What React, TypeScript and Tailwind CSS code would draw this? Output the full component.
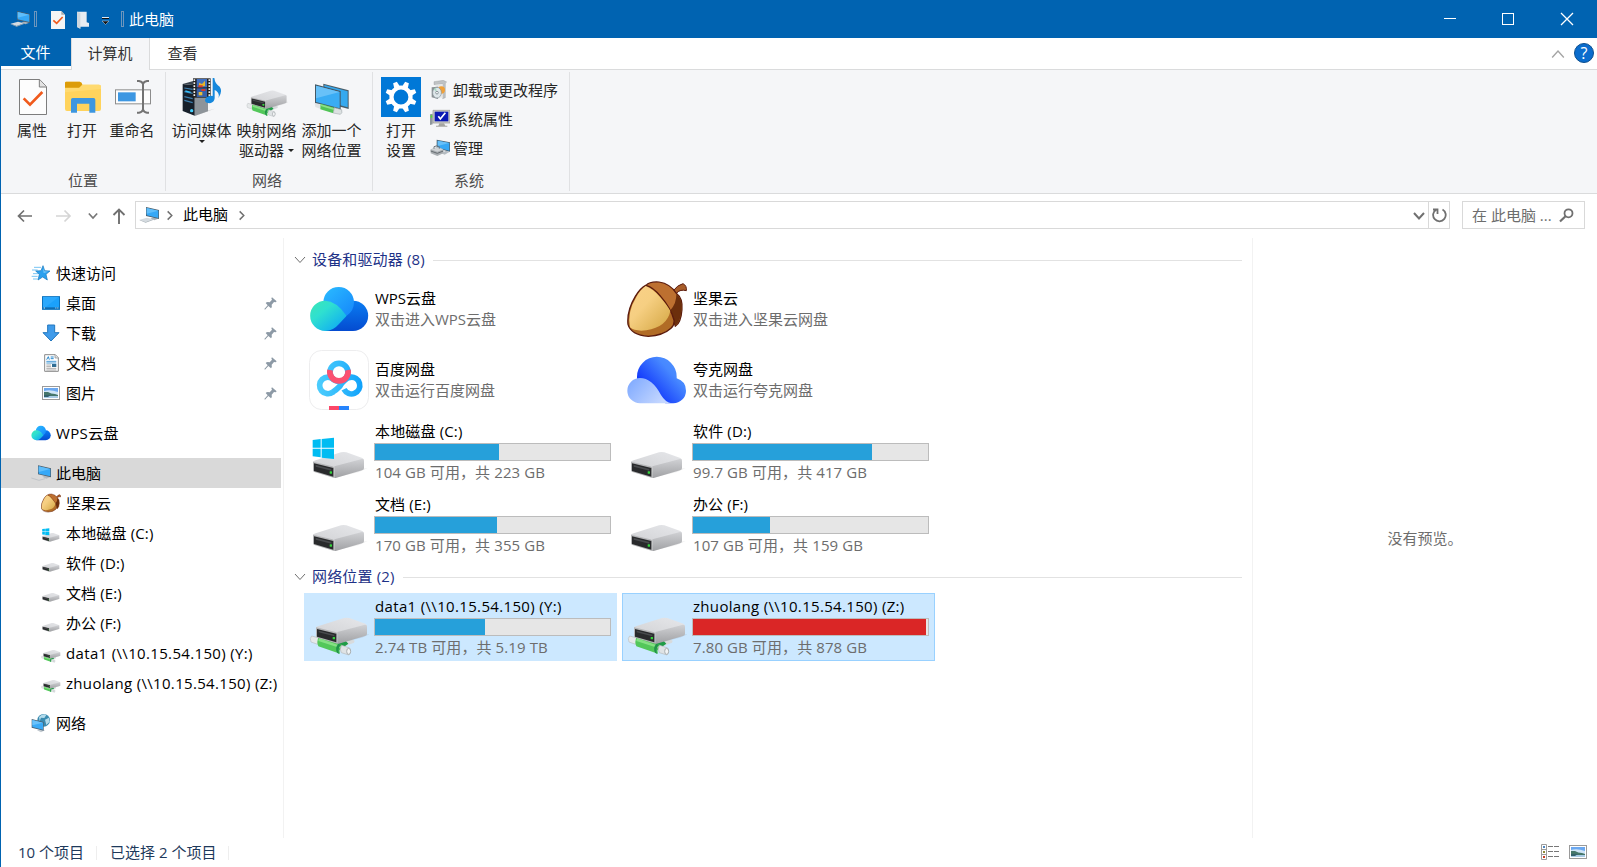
import React, { useId } from "react";

type IconProps = { size?: number; className?: string };

function Monitor({ size = 20 }: IconProps) {
  return (
    <svg width={size} height={size} viewBox="0 0 60 60" className="shrink-0">
      <path d="M2 44 24 38 42 43 20 51Z" fill="#d5dbe0" />
      <path d="M2 44 20 51 42 43 42 45 20 53 2 46Z" fill="#a3adb5" />
      <path d="M34 40 46 37 58 41 46 46Z" fill="#aab2b9" />
      <path d="M21 6 60 15 60 42 21 33Z" fill="#4c5f6d" />
      <path d="M23 9 58 17 58 39 23 31Z" fill="#35a8f7" />
      <path d="M23 9 58 17 23 26Z" fill="#5fbefb" />
    </svg>
  );
}

function MonitorOutline() {
  return (
    <svg width="20" height="20" viewBox="0 0 60 60" className="shrink-0">
      <path d="M1 45 24 52 42 47" fill="none" stroke="#b3bac0" strokeWidth="2" />
      <path d="M34 41 46 37 58 42 46 47Z" fill="#b4babf" />
      <path d="M21 7 60 16 60 43 21 34Z" fill="#4c5f6d" />
      <path d="M23 10 58 18 58 40 23 32Z" fill="#35a8f7" />
      <path d="M23 10 58 18 23 27Z" fill="#5fbefb" />
    </svg>
  );
}

function DriveShape() {
  const id = useId();
  return (
    <>
      <defs>
        <linearGradient id={id + "t"} x1="0" y1="1" x2="1" y2="0">
          <stop offset="0" stopColor="#d2d3d6" />
          <stop offset="1" stopColor="#e6e7ea" />
        </linearGradient>
        <linearGradient id={id + "s"} x1="0" y1="0" x2="0" y2="1">
          <stop offset="0" stopColor="#d0d1d4" />
          <stop offset="1" stopColor="#a0a1a4" />
        </linearGradient>
      </defs>
      <path d="M76 168 20 150 100 150 176 138 150 150Z" fill="#000" opacity=".07" />
      <path d="M12 120Q12 117 20 115L96 91Q103 89 112 91L160 108Q166 111 165 116L76 138Z" fill={`url(#${id}t)`} />
      <path d="M76 133 159 111Q166 111 165 117L165 139Q165 143 159 145L80 168 76 168Z" fill={`url(#${id}s)`} />
      <path d="M12 119 70 133Q76 134 76 139L76 168 16 150Q12 149 12 145Z" fill="#b4b5b7" />
      <path d="M15 124 73 138 73 164 15 147Z" fill="#292a2c" />
      <path d="M20 129 67 141 67 146 20 134Z" fill="#494b4e" />
      <rect x="62" y="148" width="7" height="7" rx="1" fill="#35d43c" />
    </>
  );
}

function Drive({ size = 60, kind = "plain" }: IconProps & { kind?: "plain" | "win" | "net" }) {
  return (
    <svg width={size} height={size} viewBox="0 0 180 180" className="shrink-0">
      {kind === "net" ? (
        <>
          <path d="M90 139 128 127 137 131 135 137 96 152Z" fill="#d8dbdd" />
          <path d="M80 142 108 130 118 140 90 160Z" fill="#1f9c47" />
          <path d="M8 117 30 123 26 142 6 135Q1 123 8 117Z" fill="#e6e9ea" stroke="#b9bec1" strokeWidth="2" />
          <path d="M29 119 100 144Q88 154 93 170L28 148Q22 134 29 119Z" fill="#53c75a" />
          <path d="M30 124 96 147 93 153 28 132Z" fill="#85e083" />
          <path d="M96 143Q84 156 91 171L85 168Q76 153 88 140Z" fill="#21934a" />
          <path d="M98 145 122 153Q128 160 120 174L97 167Q90 156 98 145Z" fill="#dfe3e5" stroke="#b5babd" strokeWidth="2" />
          <ellipse cx="119" cy="163" rx="6" ry="9" fill="#f2f4f5" stroke="#a9afb2" strokeWidth="3" />
          <g transform="translate(9,-28)">
            <DriveShape />
          </g>
        </>
      ) : (
        <DriveShape />
      )}
      {kind === "win" && (
        <path d="M11 54 35 51V77H11ZM38 51 75 47V77H38ZM11 80H35V106L11 103ZM38 80H75V111L38 107Z" fill="#00bcf2" />
      )}
    </svg>
  );
}

function WpsCloud({ size = 60 }: IconProps) {
  const id = useId();
  return (
    <svg width={size} height={size} viewBox="0 0 180 180" className="shrink-0">
      <defs>
        <linearGradient id={id + "a"} x1="0" y1="0" x2="1" y2="1">
          <stop offset="0" stopColor="#3ee6b4" />
          <stop offset=".35" stopColor="#2fe0d0" />
          <stop offset="1" stopColor="#08a0fb" />
        </linearGradient>
        <linearGradient id={id + "b"} x1="0" y1="0" x2="1" y2="1">
          <stop offset="0" stopColor="#2bbcff" />
          <stop offset="1" stopColor="#1587fb" />
        </linearGradient>
        <linearGradient id={id + "c"} x1="0" y1="0" x2="0" y2="1">
          <stop offset="0" stopColor="#0a7df2" />
          <stop offset="1" stopColor="#044bd0" />
        </linearGradient>
      </defs>
      <path d="M50 156H132A45.500 45.500 0 1 0 132 65L90 90Z" fill={`url(#${id}c)`} />
      <path d="M43 70A46 46 0 0 1 135 70Q135 96 113 110Q80 72 43 70Z" fill={`url(#${id}b)`} />
      <path d="M49 65A45.500 45.500 0 0 0 49 156Q72 156 90 135L113 110Q80 65 49 65Z" fill={`url(#${id}a)`} />
    </svg>
  );
}

function Acorn({ size = 60 }: IconProps) {
  const id = useId();
  return (
    <svg width={size} height={size} viewBox="0 0 180 180" className="shrink-0">
      <defs>
        <linearGradient id={id} x1="0" y1="0" x2="1" y2="1">
          <stop offset="0" stopColor="#fad188" />
          <stop offset=".4" stopColor="#f6cf82" />
          <stop offset="1" stopColor="#d3a541" />
        </linearGradient>
      </defs>
      <path d="M137 37Q152 17 168 14Q180 20 178 35Q160 30 149 42Z" fill="#a85d29" stroke="#5b1b0d" strokeWidth="3" />
      <path d="M57 19Q68 7 96 9Q130 14 148 43Q168 58 165 92Q162 132 145 142L130 96Z" fill="#bd7030" stroke="#5b1b0d" strokeWidth="3.5" />
      <path d="M148 45Q168 60 164 92Q160 130 144 141Q141 115 130 94Q149 72 148 45Z" fill="#6c2f0c" />
      <path d="M56 19Q78 24 101 52Q132 88 141 123Q143 138 132 148Q108 170 64 172Q12 168 3 136Q-1 95 25 52Q40 27 56 19Z" fill="#b16c26" stroke="#5b1b0d" strokeWidth="4" />
      <path d="M56 21Q78 29 99 54Q120 78 130 96Q120 144 58 154Q24 158 9 145Q0 100 28 54Q40 32 56 21Z" fill={`url(#${id})`} />
    </svg>
  );
}

function BaiduPan() {
  return (
    <svg width="60" height="60" viewBox="0 0 180 180" className="shrink-0">
      <defs>
        <linearGradient id="bdBlue" gradientUnits="userSpaceOnUse" x1="24" y1="0" x2="158" y2="0">
          <stop offset="0" stopColor="#4ccdfd" />
          <stop offset=".5" stopColor="#34bcfb" />
          <stop offset="1" stopColor="#10a2fb" />
        </linearGradient>
      </defs>
      <rect x="1.5" y="1.5" width="177" height="177" rx="36" fill="#fff" stroke="#ededee" strokeWidth="3" />
      <g fill="none" strokeWidth="17">
        <circle cx="90" cy="67" r="27" stroke="url(#bdBlue)" />
        <path d="M72 126A25 25 0 1 1 74 88" stroke="url(#bdBlue)" />
        <path d="M70 127Q82 120 93 108Q107 86 123 82A25 25 0 1 1 105 118" stroke="url(#bdBlue)" />
        <path d="M63 60A27.500 27.500 0 1 0 117 60" stroke="#fb5171" />
      </g>
      <path d="M60 168H90V180H60Z" fill="#fb4768" />
      <path d="M90 168H120V180H90Z" fill="#2684fc" />
    </svg>
  );
}

function QuarkPan() {
  return (
    <svg width="60" height="60" viewBox="0 0 180 180" className="shrink-0">
      <defs>
        <linearGradient id="qkMain" x1="1" y1=".2" x2=".3" y2=".8">
          <stop offset="0" stopColor="#5092ff" />
          <stop offset=".35" stopColor="#4788ff" />
          <stop offset="1" stopColor="#1238fb" />
        </linearGradient>
        <linearGradient id="qkLight" x1="0" y1="0" x2="1" y2=".5">
          <stop offset="0" stopColor="#7ba7ff" />
          <stop offset="1" stopColor="#c5d7ff" />
        </linearGradient>
      </defs>
      <path d="M30 92V80A59.500 59.500 0 0 1 149 80V85Q177 94 177 122A38 38 0 0 1 139 160H115Z" fill="url(#qkMain)" />
      <path d="M39 84A38 38 0 0 0 39 160H134Q116 158 102 135Q75 84 39 84Z" fill="url(#qkLight)" />
    </svg>
  );
}

function Picture({ w = 18 }: { w?: number }) {
  return (
    <svg width={w} height="14" viewBox="0 0 18 14" className="shrink-0">
      <rect x=".5" y=".5" width="17" height="13" fill="#fff" stroke="#9a9a9a" />
      <path d="M2 2H16V12H2Z" fill="#6ba8f0" />
      <path d="M2 5Q8 3 16 6V9H2Z" fill="#cfe4f7" />
      <path d="M2 6 6 6Q9 8 13 8L16 9V10H2Z" fill="#45766a" />
      <path d="M2 10H16V12H2Z" fill="#a9cbe6" />
      <path d="M2 9H9L6 11H2Z" fill="#35626d" />
    </svg>
  );
}

function QuickStar() {
  return (
    <svg width="20" height="20" viewBox="0 0 60 60" className="shrink-0">
      <path d="M9 13H30M3 21H20M6 32H22M2 40H20M6 48H20" stroke="#5cb8f1" strokeWidth="2.500" />
      <path d="M36 8 41 23 57 24 45 34 49 51 35 42 21 51 25 34 14 24 30 23Z" fill="#2aa0ee" stroke="#1275bd" strokeWidth="2" />
      <path d="M36 14 40 25 52 26 38 30Z" fill="#75c8fa" />
    </svg>
  );
}

function Desktop() {
  return (
    <svg width="18" height="14" viewBox="0 0 54 42" className="shrink-0">
      <rect x="1.500" y="2" width="51" height="38" fill="#1ba1fb" stroke="#0b72bd" strokeWidth="3" />
      <path d="M3 3H50L10 34H3Z" fill="#2ba9fd" />
      <path d="M3 34H51V39H3Z" fill="#0f6cb1" />
      <path d="M5 36H9M40 36H43M46 36H49" stroke="#fff" strokeWidth="2.500" />
    </svg>
  );
}

function Download() {
  return (
    <svg width="18" height="18" viewBox="0 0 54 54" className="shrink-0">
      <path d="M17 3H38V26H51L27 51 3 26H17Z" fill="#3f9bea" stroke="#2277be" strokeWidth="3" />
    </svg>
  );
}

function DocIcon() {
  return (
    <svg width="15" height="18" viewBox="0 0 45 54" className="shrink-0">
      <path d="M2 2H34L43 11V52H2Z" fill="#fff" stroke="#8a8a8a" strokeWidth="3" />
      <path d="M33 2V12H43" fill="#ddd" stroke="#8a8a8a" strokeWidth="2" />
      <path d="M8 17 13 8 16 17M20 9H29M20 14H29" stroke="#2787cc" strokeWidth="3" fill="none" />
      <path d="M7 22H37M7 27H37" stroke="#2787cc" strokeWidth="2.500" />
      <path d="M7 33H21M7 38H21M7 43H37M7 48H37" stroke="#9b9b9b" strokeWidth="2.500" />
      <path d="M24 30H37V39H24Z" fill="#2f6d93" />
    </svg>
  );
}

function NetworkIcon() {
  return (
    <svg width="20" height="20" viewBox="0 0 60 60" className="shrink-0">
      <circle cx="38" cy="22" r="19" fill="#3a8bb0" />
      <path d="M24 12Q36 0 46 6L40 15 30 14 26 24ZM42 20 54 14 56 26 46 36Z" fill="#b4dcec" />
      <path d="M18 52 30 48 42 52 30 58Z" fill="#c2c9cf" />
      <path d="M2 18 38 27V53L2 44Z" fill="#4a6274" />
      <path d="M4 21 36 29V50L4 42Z" fill="#3aaaf6" />
      <path d="M4 21 36 29 4 37Z" fill="#69c2fb" />
    </svg>
  );
}

function Pin() {
  return (
    <svg width="13" height="13" viewBox="0 0 39 39" className="shrink-0">
      <path d="M24 1 38 13 35 16 30 15 23 23Q25 30 21 34L13 27 3 38 1 36 11 25 5 18Q9 13 17 16L24 8 22 4Z" fill="#8d9aa6" />
    </svg>
  );
}

function PropertiesIcon() {
  return (
    <svg width="28" height="36" viewBox="0 0 84 108" className="ml-px">
      <path d="M1.500 1.500H62L82.500 23V106.500H1.500Z" fill="#fdfdfd" stroke="#7d7d7d" strokeWidth="3" />
      <path d="M61 2V24H82" fill="#e3e3e3" stroke="#7d7d7d" strokeWidth="3" />
      <path d="M14 58 33 77 70 39" fill="none" stroke="#f05a1c" strokeWidth="8" />
    </svg>
  );
}

function OpenFolderIcon() {
  return (
    <svg width="36" height="32" viewBox="0 0 108 96" className="ml-[2px]">
      <path d="M0 6Q0 2 4 2H44Q51 3 52 11H102Q108 11 108 17V84Q108 90 102 90H6Q0 90 0 84Z" fill="#ffd35c" />
      <path d="M0 6Q0 2 4 2H44Q51 3 52 11L44 20H0Z" fill="#dc9c08" />
      <path d="M0 21H42L52 11H102Q108 11 108 17V24L0 34Z" fill="#ffda70" />
      <path d="M18 95V56Q18 51 23 51H86Q91 51 91 56V95H73V68H36V95Z" fill="#3c96df" />
    </svg>
  );
}

function RenameIcon() {
  return (
    <svg width="36" height="34" viewBox="0 0 108 102" className="ml-[2px]">
      <rect x="1.500" y="29.500" width="105" height="42" fill="#fdfdfd" stroke="#8c8c8c" strokeWidth="3" />
      <path d="M9 37H62V64H9Z" fill="#3d97e2" />
      <path d="M66 3H72Q81 4 84 12Q87 4 96 3H102M84 10V92M66 98H72Q81 97 84 89Q87 97 96 98H102" fill="none" stroke="#737373" strokeWidth="6" />
    </svg>
  );
}

function MediaIcon() {
  return (
    <svg width="40" height="38" viewBox="0 0 120 114">
      <path d="M38 20 78 10V100L38 114Z" fill="#8d949a" />
      <path d="M76 98 98 92 40 113Z" fill="#999" opacity=".5" />
      <path d="M2 18 38 22V113L2 99Z" fill="#17202b" />
      <path d="M2 18 34 9 60 12 38 22Z" fill="#39434e" />
      <path d="M7 30 32 34M7 41 32 46M7 56 32 62M7 67 32 74" stroke="#3e7fae" strokeWidth="3.500" />
      <path d="M10 39 26 43" stroke="#36c3ff" strokeWidth="4" />
      <circle cx="29" cy="98" r="5" fill="#45d2ff" />
      <path d="M33 1H86V59H33Z" fill="#222" />
      <path d="M44 3H75V28H44Z" fill="#416fbe" />
      <path d="M44 31H75V57H44Z" fill="#355fa9" />
      <path d="M51 14 60 18 69 8 69 24 51 26Z" fill="#e5b328" />
      <path d="M49 22H62V28H49ZM58 33H70V39H58Z" fill="#d73a2b" />
      <path d="M50 42H61V52H50Z" fill="#e8bd3a" />
      <path d="M37 4V58M82 4V58" stroke="#f0f0f0" strokeWidth="5" strokeDasharray="5 4" />
      <path d="M92 0H97Q99 18 113 26Q123 40 109 61Q115 44 98 36V61Q97 73 84 76Q69 76 69 66Q72 54 86 53L92 54Z" fill="#1688dc" />
    </svg>
  );
}

function NetPlaceIcon() {
  return (
    <svg width="36" height="32" viewBox="0 0 108 96" className="mt-[4px]">
      <path d="M28 2 104 22V78L28 58Z" fill="#4b5d68" />
      <path d="M31 6 101 25V73L31 54Z" fill="#36a9ef" />
      <path d="M3 4 80 24V81L3 61Z" fill="#455864" />
      <path d="M6 8 77 27V76L6 57Z" fill="#3aacf4" />
      <path d="M6 8 77 27 6 46Z" fill="#68c1f8" />
      <path d="M2 60 22 64 20 78 4 72Z" fill="#e0e3e4" />
      <path d="M20 62 62 74 58 91 19 79Z" fill="#51c457" />
      <path d="M20 64 61 76 60 81 20 69Z" fill="#8ddf8b" />
      <path d="M61 74 83 80Q86 91 79 94L58 90Z" fill="#dce1e2" stroke="#a9b0b4" strokeWidth="2" />
    </svg>
  );
}

function GearIcon() {
  return (
    <svg width="40" height="40" viewBox="0 0 40 40">
      <path d="M0 0H40V40H0Z" fill="#0078d7" />
      <circle cx="20" cy="20" r="9.500" fill="none" stroke="#fff" strokeWidth="4.200" />
      {[22.5, 67.5, 112.5, 157.5, 202.5, 247.5, 292.5, 337.5].map((a) => (
        <path key={a} d="M16.900 10.500 18 4.300H22L23.100 10.500Z" fill="#fff" transform={`rotate(${a} 20 20)`} />
      ))}
    </svg>
  );
}

function UninstallIcon() {
  return (
    <svg width="20" height="20" viewBox="0 0 60 60" className="shrink-0">
      <path d="M12 5 40 1 50 6 46 9V53L38 56V12L12 14Z" fill="#bfc2c4" stroke="#8c9092" />
      <path d="M16 14 38 12V54L18 50Z" fill="#e6e7e7" />
      <circle cx="34" cy="30" r="11" fill="#f0a13a" />
      <path d="M5 22 24 20V57L5 52Z" fill="#8b9194" />
      <ellipse cx="21" cy="38" rx="13" ry="16" fill="#dfe7ea" stroke="#87939a" strokeWidth="2" />
      <path d="M21 38 11 27 18 23Z" fill="#a9d8c3" />
      <circle cx="21" cy="38" r="4" fill="#fff" stroke="#8c979c" strokeWidth="3" />
    </svg>
  );
}

function SysPropIcon() {
  return (
    <svg width="20" height="20" viewBox="0 0 60 60" className="shrink-0">
      <path d="M0 16 8 14V46L0 48Z" fill="#8f979c" />
      <path d="M2 19H7V26H2Z" fill="#50e02c" />
      <path d="M9 4H60V42H9Z" fill="#cdcdc8" stroke="#92928e" strokeWidth="2" />
      <path d="M14 8H55V37H14Z" fill="#0a18b4" />
      <path d="M25 22 31 30 46 11" stroke="#fff" strokeWidth="5" fill="none" />
      <path d="M28 43H42L46 50H52V53H18V50H25Z" fill="#a6a6a1" />
    </svg>
  );
}

function ManageIcon() {
  return (
    <svg width="20" height="20" viewBox="0 0 60 60" className="shrink-0">
      <path d="M34 46 48 38 58 42 44 50Z" fill="#b5bcc2" />
      <path d="M20 5 60 13V41L20 31Z" fill="#4b5f6d" />
      <path d="M23 8 58 15V38L23 29Z" fill="#36a8f5" />
      <path d="M23 8 58 15 23 24Z" fill="#66c0fa" />
      <path d="M2 34 22 28 40 34V46L22 54 2 46Z" fill="#a9aeb2" />
      <path d="M2 34 22 28 40 34 22 41Z" fill="#cfd3d6" />
      <path d="M12 32V26Q20 21 28 26V32" fill="none" stroke="#70777c" strokeWidth="3" />
      <path d="M2 39 22 46 40 39" fill="none" stroke="#666d72" strokeWidth="3" />
    </svg>
  );
}

function Chevron({ dir = "down", w = 11, color = "#707070", stroke = 1 }: { dir?: "down" | "right" | "up"; w?: number; color?: string; stroke?: number }) {
  const d = dir === "down" ? "M1 3 6 8.500 11 3" : dir === "up" ? "M1 9 6 3.500 11 9" : "M4 1.500 8.500 6 4 10.500";
  return (
    <svg width={w} height={w} viewBox="0 0 12 12" className="shrink-0">
      <path d={d} fill="none" stroke={color} strokeWidth={stroke} />
    </svg>
  );
}

function RibbonButton({ icon, lines, width, arrow }: { icon: React.ReactNode; lines: string[]; width: string; arrow?: "below" | "inline" }) {
  return (
    <div className={`flex flex-col items-center ${width}`}>
      <div className="flex h-[46px] items-center justify-center">{icon}</div>
      {lines.map((l, i) => (
        <div key={l} className="flex h-5 items-center whitespace-nowrap leading-5">
          {l}
          {arrow === "inline" && i === lines.length - 1 && <span className="ml-1 border-x-[3px] border-t-[3px] border-x-transparent border-t-[#222]" />}
        </div>
      ))}
      {arrow === "below" && <span className="border-x-[3px] border-t-[3px] border-x-transparent border-t-[#222]" />}
    </div>
  );
}

function RibbonGroup({ label, width, labelPad = "", children }: { label: string; width: string; labelPad?: string; children: React.ReactNode }) {
  return (
    <div className={`my-[2px] flex shrink-0 flex-col border-r border-[#e0e1e3] ${width}`}>
      <div className="flex h-[98px] pt-[2px]">{children}</div>
      <div className={`text-center leading-5 text-[#4d4d4d] ${labelPad}`}>{label}</div>
    </div>
  );
}

function NavItem({ icon, label, child, pin, selected, spacing = "" }: { icon: React.ReactNode; label: string; child?: boolean; pin?: boolean; selected?: boolean; spacing?: string }) {
  return (
    <div className={`flex h-[30px] w-[280px] items-center ${child ? "pl-10" : "pl-[30px]"} ${selected ? "bg-[#d9d9d9]" : ""}`}>
      <span className="flex w-5 justify-center">{icon}</span>
      <span className={`ml-[5px] grow whitespace-nowrap leading-5 ${spacing}`}>{label}</span>
      {pin && <span className="mr-1"><Pin /></span>}
    </div>
  );
}

function SectionHead({ label }: { label: string }) {
  return (
    <div className="flex h-5 w-[948px] items-center">
      <span className="mt-px"><Chevron w={12} color="#6e6e6e" /></span>
      <span className="ml-[6px] mr-2 whitespace-nowrap leading-5 tracking-[.15px] text-[#1e3287]">{label}</span>
      <span className="mt-[2px] h-px grow bg-[#e2e2e2]" />
    </div>
  );
}

function AppTile({ icon, name, desc }: { icon: React.ReactNode; name: string; desc: string }) {
  return (
    <div className="flex h-[60px] w-[313px] pl-[5px]">
      {icon}
      <div className="ml-[6px] whitespace-nowrap pt-[9px] leading-[21px]">
        <div>{name}</div>
        <div className="text-[#6d6d6d]">{desc}</div>
      </div>
    </div>
  );
}

function DriveTile({ kind, name, desc, fill, full, state = "", spacing = "" }: { kind: "plain" | "win" | "net"; name: string; desc: string; fill: number; full?: boolean; state?: string; spacing?: string }) {
  return (
    <div className={`flex h-[68px] w-[313px] border pl-1 pt-[3px] ${state || "border-transparent"}`}>
      <Drive kind={kind} />
      <div className="-mt-px ml-[5px] whitespace-nowrap">
        <div className={`h-[22px] pl-px leading-5 ${spacing}`}>{name}</div>
        <div className="h-[18px] w-[237px] border border-[#bcbcbc] bg-[#e6e6e6]">
          <div className={`h-full ${full ? "bg-[#da2626]" : "bg-[#26a0da]"}`} style={{ width: fill }} />
        </div>
        <div className="mt-px pl-px leading-5 tracking-[.1px] text-[#6d6d6d]">{desc}</div>
      </div>
    </div>
  );
}

export default function App() {
  return (
    <div className="flex h-[867px] w-[1597px] flex-col overflow-hidden bg-white font-['Open_Sans','Noto_Sans_CJK_SC',sans-serif] text-[15px] text-black">
      <header className="flex h-[38px] shrink-0 items-center bg-[#0063b1] text-white">
        <span className="ml-[10px]"><Monitor size={20} /></span>
        <span className="ml-1 h-4 w-[3px] border border-[#6d96bd]" />
        <svg width="14" height="18" viewBox="0 0 42 54" className="ml-[14px] mt-[2px]">
          <path d="M0 0H31L42 11V54H0Z" fill="#f5f5f5" />
          <path d="M31 0V11H42Z" fill="#aaa" />
          <path d="M7 28 17 37 35 18" fill="none" stroke="#f05a1c" strokeWidth="5" />
        </svg>
        <svg width="12" height="18" viewBox="0 0 36 54" className="ml-3 mt-[2px]">
          <path d="M0 2H29V34L36 36V47H10V53L0 48Z" fill="#e8ecf1" />
          <path d="M0 2 10 6V53L0 48Z" fill="#cfd7df" />
        </svg>
        <svg width="9" height="8" viewBox="0 0 9 8" className="ml-3 mt-[4px]">
          <path d="M1 .5H8" stroke="#dfe9f3" />
          <path d="M1 1.500H8" stroke="#111" />
          <path d="M1 4H8L4.500 7.500Z" fill="#111" stroke="#c9dbea" strokeWidth=".5" />
        </svg>
        <span className="ml-[11px] h-4 w-[3px] border border-[#6d96bd]" />
        <span className="ml-[5px] leading-5">此电脑</span>
        <div className="ml-auto mr-[23px] flex items-center">
          <svg width="130" height="14" viewBox="0 0 130 14" fill="none" stroke="#fff">
            <path d="M0 6.500H12" />
            <rect x="58.500" y="1.500" width="11" height="11" />
            <path d="M117 1 129 13M129 1 117 13" strokeWidth="1.300" />
          </svg>
        </div>
      </header>

      <div className="flex min-h-0 grow flex-col border-l border-[#0063b1]">
        <div className="flex h-8 shrink-0 border-b border-[#dadbdc]">
          <div className="h-7 w-[70px] bg-[#0063b1] pr-px text-center leading-[29px] text-white">文件</div>
          <div className="-mb-px h-8 w-[79px] border-x border-[#dadbdc] bg-[#f5f6f8] pr-px text-center leading-[31px] text-[#333]">计算机</div>
          <div className="w-[65px] text-center leading-[31px] text-[#333]">查看</div>
          <div className="ml-auto mr-[3px] flex items-center">
            <Chevron dir="up" w={14} color="#a5a5a5" stroke={1.2} />
            <span className="ml-[9px] mt-[-1px] flex size-5 items-center justify-center rounded-full border border-[#0d4f8f] bg-[#0a6ccd] text-[16px] leading-none text-white">?</span>
          </div>
        </div>

        <div className="flex h-[124px] shrink-0 border-b border-[#dadbdc] bg-[#f5f6f8] text-[#262626]">
          <RibbonGroup label="位置" width="w-[165px]">
            <div className="flex pl-[6px]">
              <RibbonButton width="w-[50px]" icon={<PropertiesIcon />} lines={["属性"]} />
              <RibbonButton width="w-[50px]" icon={<OpenFolderIcon />} lines={["打开"]} />
              <RibbonButton width="w-[50px]" icon={<RenameIcon />} lines={["重命名"]} />
            </div>
          </RibbonGroup>
          <RibbonGroup label="网络" width="w-[207px]" labelPad="pr-1">
            <div className="flex pl-[3px]">
              <RibbonButton width="w-[65px]" icon={<MediaIcon />} lines={["访问媒体"]} arrow="below" />
              <RibbonButton width="w-[65px]" icon={<Drive size={42} kind="net" />} lines={["映射网络", "驱动器"]} arrow="inline" />
              <RibbonButton width="w-[65px]" icon={<NetPlaceIcon />} lines={["添加一个", "网络位置"]} />
            </div>
          </RibbonGroup>
          <RibbonGroup label="系统" width="w-[197px]" labelPad="pr-1">
            <div className="flex pl-2">
              <RibbonButton width="w-[40px]" icon={<GearIcon />} lines={["打开", "设置"]} />
              <div className="ml-[9px] flex flex-col pt-px">
                {[
                  { t: "卸载或更改程序", i: <UninstallIcon /> },
                  { t: "系统属性", i: <SysPropIcon /> },
                  { t: "管理", i: <ManageIcon /> },
                ].map((r) => (
                  <div key={r.t} className="flex h-[29px] items-center gap-[3px] whitespace-nowrap leading-5">
                    {r.i}
                    {r.t}
                  </div>
                ))}
              </div>
            </div>
          </RibbonGroup>
        </div>

        <div className="flex h-[44px] shrink-0 items-start pt-[7px]">
          <div className="flex h-7 w-[134px] items-center pl-4">
            <svg width="16" height="14" viewBox="0 0 16 14" fill="none" stroke="#707070" strokeWidth="1.700" className="mt-px"><path d="M15 7H1.500M7 1.500 1.500 7 7 12.500" /></svg>
            <svg width="16" height="14" viewBox="0 0 16 14" fill="none" stroke="#d5d5d5" strokeWidth="1.700" className="ml-[23px] mt-px"><path d="M0 7H14M8.500 1.500 14 7 8.500 12.500" /></svg>
            <span className="ml-4 mt-px"><Chevron w={10} color="#777" stroke={2} /></span>
            <svg width="14" height="16" viewBox="0 0 14 16" fill="none" stroke="#707070" strokeWidth="1.900" className="ml-[14px] mt-[2px]"><path d="M7 16V1.500M1.500 7 7 1.500 12.500 7" /></svg>
          </div>
          <div className="flex h-7 w-[1315px] items-center border border-[#d9d9d9]">
            <span className="ml-[3px]"><Monitor size={20} /></span>
            <span className="ml-[5px]"><Chevron dir="right" w={11} stroke={1.6} /></span>
            <span className="-mt-[2px] ml-[8px] leading-5">此电脑</span>
            <span className="ml-[8px]"><Chevron dir="right" w={11} stroke={1.6} /></span>
            <span className="ml-auto mr-[3px] mt-[2px]"><Chevron w={12} stroke={2} /></span>
            <span className="flex h-full w-[21px] items-center justify-center border-l border-[#d9d9d9]">
              <svg width="15" height="15" viewBox="0 0 15 15" fill="none" stroke="#707070" strokeWidth="1.800" className="ml-px mt-px"><path d="M10.500 1.500A6.300 6.300 0 1 1 4 1.700M1 1.500H5.500V6" /></svg>
            </span>
          </div>
          <div className="ml-3 flex h-7 w-[123px] items-center border border-[#d9d9d9] pl-[9px] text-[#6d6d6d]">
            <span className="whitespace-nowrap leading-5">在 此电脑 ...</span>
            <svg width="15" height="15" viewBox="0 0 15 15" fill="none" stroke="#707070" strokeWidth="1.800" className="ml-auto mr-[10px]"><circle cx="9.500" cy="5.300" r="4" /><path d="M6.500 8.200 1 13.500" strokeWidth="2.200" /></svg>
          </div>
        </div>

        <div className="flex h-[600px] shrink-0">
          <nav className="flex w-[283px] shrink-0 flex-col border-r border-[#f2f2f2] pt-5">
            <NavItem icon={<QuickStar />} label="快速访问" />
            <NavItem child pin icon={<Desktop />} label="桌面" />
            <NavItem child pin icon={<Download />} label="下载" />
            <NavItem child pin icon={<DocIcon />} label="文档" />
            <NavItem child pin icon={<Picture />} label="图片" />
            <div className="my-[10px]"><NavItem icon={<WpsCloud size={20} />} label="WPS云盘" spacing="tracking-[.35px]" /></div>
            <NavItem selected icon={<MonitorOutline />} label="此电脑" />
            <NavItem child icon={<Acorn size={20} />} label="坚果云" />
            <NavItem child icon={<Drive size={20} kind="win" />} label="本地磁盘 (C:)" spacing="tracking-[.15px]" />
            <NavItem child icon={<Drive size={20} />} label="软件 (D:)" spacing="tracking-[.15px]" />
            <NavItem child icon={<Drive size={20} />} label="文档 (E:)" spacing="tracking-[.1px]" />
            <NavItem child icon={<Drive size={20} />} label="办公 (F:)" spacing="tracking-[.1px]" />
            <NavItem child icon={<Drive size={20} kind="net" />} label="data1 (\\10.15.54.150) (Y:)" spacing="tracking-[.34px]" />
            <NavItem child icon={<Drive size={20} kind="net" />} label="zhuolang (\\10.15.54.150) (Z:)" spacing="tracking-[.32px]" />
            <div className="mt-[10px]"><NavItem icon={<NetworkIcon />} label="网络" /></div>
          </nav>

          <main className="flex w-[969px] shrink-0 flex-col border-r border-[#f2f2f2] pl-[10px] pt-[11px]">
            <SectionHead label="设备和驱动器 (8)" />
            <div className="ml-[10px] mt-[10px] grid w-[631px] grid-cols-2 gap-x-[5px] gap-y-[11px]">
              <AppTile icon={<WpsCloud />} name="WPS云盘" desc="双击进入WPS云盘" />
              <AppTile icon={<Acorn />} name="坚果云" desc="双击进入坚果云网盘" />
              <AppTile icon={<BaiduPan />} name="百度网盘" desc="双击运行百度网盘" />
              <AppTile icon={<QuarkPan />} name="夸克网盘" desc="双击运行夸克网盘" />
            </div>
            <div className="ml-[10px] mt-2 grid w-[631px] grid-cols-2 gap-[5px]">
              <DriveTile kind="win" name="本地磁盘 (C:)" desc="104 GB 可用，共 223 GB" fill={124} spacing="tracking-[.15px]" />
              <DriveTile kind="plain" name="软件 (D:)" desc="99.7 GB 可用，共 417 GB" fill={179} spacing="tracking-[.15px]" />
              <DriveTile kind="plain" name="文档 (E:)" desc="170 GB 可用，共 355 GB" fill={122} spacing="tracking-[.1px]" />
              <DriveTile kind="plain" name="办公 (F:)" desc="107 GB 可用，共 159 GB" fill={77} spacing="tracking-[.1px]" />
            </div>
            <div className="mt-[7px]"><SectionHead label="网络位置 (2)" /></div>
            <div className="ml-[10px] mt-[7px] grid w-[631px] grid-cols-2 gap-[5px]">
              <DriveTile kind="net" name="data1 (\\10.15.54.150) (Y:)" desc="2.74 TB 可用，共 5.19 TB" fill={110} state="border-[#cce8ff] bg-[#cce8ff]" spacing="tracking-[.34px]" />
              <DriveTile kind="net" name="zhuolang (\\10.15.54.150) (Z:)" desc="7.80 GB 可用，共 878 GB" fill={233} full state="border-[#99d1ff] bg-[#cce8ff]" spacing="tracking-[.32px]" />
            </div>
          </main>

          <aside className="flex grow items-center justify-center leading-5 text-[#6d6d6d]">没有预览。</aside>
        </div>

        <footer className="flex h-[29px] shrink-0 items-center text-[#1e395b]">
          <span className="-mt-[2px] ml-[17px] leading-5">10 个项目</span>
          <span className="ml-3 h-[14px] w-px bg-[#eee]" />
          <span className="-mt-[2px] ml-[13px] leading-5">已选择 2 个项目</span>
          <span className="ml-3 h-[14px] w-px bg-[#eee]" />
          <svg width="18" height="16" viewBox="0 0 18 16" className="-mt-px ml-auto mr-[10px]">
            <path d="M.500 .500H5.500V15.500H.500ZM.500 5.500H5.500M.500 10.500H5.500" fill="#fff" stroke="#9c9c9c" />
            <path d="M2 2H4V4H2Z" fill="#4d86c0" />
            <path d="M2 7H4V9H2Z" fill="#8d8a35" />
            <path d="M2 12H4V14H2Z" fill="#c83a20" />
            <path d="M7 2.500H12M13 2.500H18M7 7.500H12M13 7.500H18M7 12.500H12M13 12.500H18" stroke="#777" />
          </svg>
          <span className="-mt-px mr-[10px]"><Picture /></span>
        </footer>
      </div>
    </div>
  );
}
